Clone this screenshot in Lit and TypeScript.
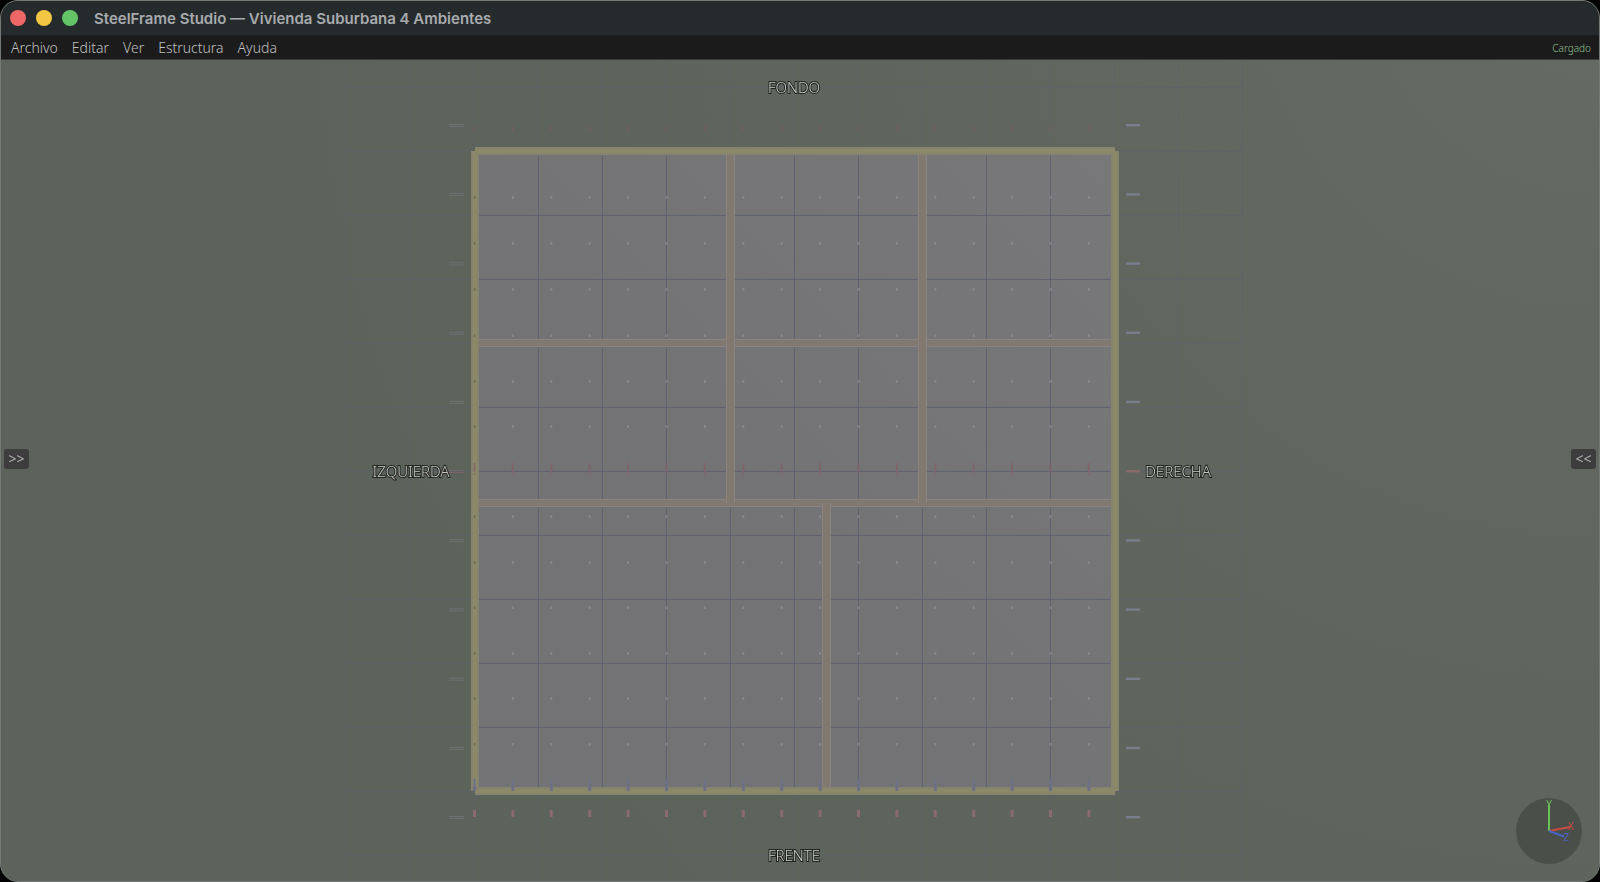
import { LitElement, html, svg, css } from "lit";
import { customElement, state } from "lit/decorators.js";

const range = (n: number) => Array.from({ length: n }, (_, i) => i);

const LEFT = 474;
const TOP = 91;
const CELL = 64;
const SIZE = CELL * 10;
const STUD = 38.4;

const studs = range(17).map((i) => LEFT - 0.5 + i * STUD);
const purlins = [137, 183, 229, 275, 321, 366, 456, 502, 547, 593, 638, 684];
const rails = range(11).map((i) => 65 + i * 69.2);

@customElement("plan-view")
class PlanView extends LitElement {
  static styles = css`
    :host { display: block; position: relative; min-height: 0; overflow: hidden; }
    .plan { display: block; width: 100%; height: 100%; will-change: transform; }
    .grid { stroke: #5c5f72; stroke-width: 1; }
    .outer { opacity: 0.42; }
    .inner { opacity: 0.85; }
    .wall-edge { fill: #86836f; }
    .wall { fill: #8b8968; }
    .part-edge { fill: #8b8380; }
    .part { fill: #81796f; }
    .label {
      font: 300 15px "Noto Sans", "Open Sans", sans-serif;
      fill: #c8cac7;
      stroke: #22251f;
      stroke-width: 2px;
      paint-order: stroke;
      text-anchor: middle;
    }
  `;

  private box(x: number, y: number, w: number, h: number, kind: string, edge: number) {
    const vertical = h > w;
    return svg`
      <rect class="${kind}-edge" x=${x} y=${y} width=${w} height=${h}></rect>
      <rect class=${kind}
        x=${vertical ? x + edge : x} y=${vertical ? y : y + edge}
        width=${vertical ? w - edge * 2 : w} height=${vertical ? h : h - edge * 2}></rect>`;
  }

  private lines(first: number, last: number, a: number, b: number, cls: string) {
    const steps = range(last - first + 1).map((i) => first + i);
    return svg`<g class="grid ${cls}">
      ${steps.map((k) => svg`<line x1=${LEFT - 0.5 + k * CELL} x2=${LEFT - 0.5 + k * CELL} y1=${a} y2=${b}></line>`)}
    </g>`;
  }

  render() {
    return html`
      <svg class="plan" viewBox="0 0 1598 821" preserveAspectRatio="xMidYMid slice" role="img" aria-label="Planta">
        <defs>
          <radialGradient id="ground" gradientUnits="userSpaceOnUse" cx="1598" cy="-100" r="1300">
            <stop offset="0" stop-color="#656a62"></stop>
            <stop offset="0.5" stop-color="#60665e"></stop>
            <stop offset="1" stop-color="#5c635a"></stop>
          </radialGradient>
          <linearGradient id="slab" x1="0" y1="1" x2="1" y2="0">
            <stop offset="0.4" stop-color="#737275"></stop>
            <stop offset="1" stop-color="#787779"></stop>
          </linearGradient>
        </defs>
        <rect width="1598" height="821" fill="url(#ground)"></rect>
        ${this.lines(-2, 12, 0, 821, "outer")}
        <g class="grid outer">
          ${range(13).map((k) => svg`<line x1="346" x2="1243" y1=${27.5 + k * CELL} y2=${27.5 + k * CELL}></line>`)}
        </g>

        <rect fill="url(#slab)" x=${LEFT} y=${TOP} width=${SIZE} height=${SIZE}></rect>
        ${this.lines(1, 9, TOP, TOP + SIZE, "inner")}
        <g class="grid inner">
          ${range(9).map((k) => svg`<line x1=${LEFT} x2=${LEFT + SIZE} y1=${155.5 + k * CELL} y2=${155.5 + k * CELL}></line>`)}
        </g>

        ${this.box(478, 279, 634, 8, "part", 1)}
        ${this.box(478, 439, 634, 8, "part", 1)}
        ${this.box(725, 94, 9, 349, "part", 1)}
        ${this.box(917, 94, 9, 349, "part", 1)}
        ${this.box(821, 443, 9, 285, "part", 1)}
        ${this.box(LEFT - 4, TOP, 8, SIZE, "wall", 2)}
        ${this.box(LEFT + SIZE - 4, TOP, 8, SIZE, "wall", 2)}
        ${this.box(LEFT, TOP - 4, SIZE, 8, "wall", 2)}
        ${this.box(LEFT, TOP + SIZE - 4, SIZE, 8, "wall", 2)}

        ${studs.map((x, i) => svg`
          <g>
            <rect x=${x - 1} y="66" width="2" height="5" fill="#7c5f5f" opacity="0.45"></rect>
            <rect x=${x - 1} y="403" width="2" height="9" fill="#83606a" opacity="0.7"></rect>
            <rect x=${x - 1} y="413" width="2" height="2" fill="#83606a" opacity="0.5"></rect>
            <rect x=${x - 1} y="719" width="2" height="12" fill="#6c708c" opacity="0.9"></rect>
            <rect x=${x - 1.5} y="726" width="3" height="5" fill="#6c7086" opacity="0.9"></rect>
            <rect x=${x - 1.5} y="750" width="3" height="7" fill="#8a6a6c"></rect>
            ${purlins.map((y) => svg`<rect x=${x - 1} y=${y - 1} width="2" height="3" fill=${i === 0 ? "#686850" : "#908f90"} opacity="0.7"></rect>`)}
          </g>`)}

        ${rails.map((y, i) => {
          const red = i === 5;
          return svg`
            <rect x="448" y=${y - 1} width="15" height="1" fill=${red ? "#80666a" : "#70777b"} opacity="0.7"></rect>
            <rect x="448" y=${y + 1} width="15" height="1" fill=${red ? "#80666a" : "#70777b"} opacity="0.7"></rect>
            <rect x="1125" y=${y - 1} width="14" height="2.4" fill=${red ? "#8a686a" : "#787e8c"}></rect>`;
        })}

        <text class="label" x="793" y="33">FONDO</text>
        <text class="label" x="793" y="801">FRENTE</text>
        <text class="label" x="410" y="417">IZQUIERDA</text>
        <text class="label" x="1177" y="417">DERECHA</text>
      </svg>
    `;
  }
}

@customElement("axis-gizmo")
class AxisGizmo extends LitElement {
  static styles = css`
    :host { display: block; }
    svg { display: block; width: 66px; height: 66px; overflow: visible; }
    .line { stroke-width: 2; fill: none; }
    .glyph { font: 10px "Noto Sans", sans-serif; text-anchor: middle; }
  `;
  render() {
    return html`
      <svg viewBox="0 0 66 66" role="img" aria-label="Ejes">
        <circle cx="33" cy="33" r="33" fill="#4a5049"></circle>
        <path class="line" stroke="#68c258" d="M33 33V7"></path>
        <path class="line" stroke="#cb4b44" d="M33 33L54 29"></path>
        <path class="line" stroke="#4961c4" d="M33 33L48 38.500"></path>
        <text class="glyph" x="33" y="10" fill="#68c258">Y</text>
        <text class="glyph" x="55" y="32" fill="#cb4b44">X</text>
        <text class="glyph" x="50" y="43" fill="#4961c4">Z</text>
      </svg>
    `;
  }
}

@customElement("app-root")
class AppRoot extends LitElement {
  @state() private menus = ["Archivo", "Editar", "Ver", "Estructura", "Ayuda"];

  static styles = css`
    :host { display: block; background: #000; height: 100vh; }
    * { box-sizing: border-box; }
    button { font: inherit; color: inherit; border: 0; padding: 0; margin: 0; background: none; }
    .window {
      height: 100%;
      display: grid;
      grid-template-rows: 34px 25px minmax(0, 1fr);
      border: 1px solid #737a75;
      border-radius: 18px;
      overflow: hidden;
      background: #5c635a;
    }
    .titlebar { display: flex; align-items: center; gap: 16px; padding: 0 9px; background: #252a2d; }
    .lights { display: flex; gap: 10px; }
    .light { width: 16px; height: 16px; border-radius: 50%; }
    .close { background: #ec6765; }
    .minimise { background: #f3c744; }
    .zoom { background: #62c466; }
    .title { margin: 0; padding-top: 1px; font: 600 15px/20px Inter, sans-serif; color: #a8abad; }
    .menubar {
      display: flex; align-items: center; justify-content: space-between;
      padding: 2px 8px 0 10px; background: #1b1b1b; border-bottom: 1px solid #393c39;
    }
    .menus { display: flex; gap: 14px; font: 300 14px/20px "Noto Sans", "Open Sans", sans-serif; color: #c0c0c0; }
    .status { font: 300 10px/16px "Noto Sans", sans-serif; color: #93c492; }
    .stage { position: relative; display: grid; min-height: 0; }
    .toggle {
      position: absolute; top: calc(50% - 22px); width: 25px; height: 20px;
      border-radius: 3px; background: #3c3d3c; color: #b4b5b4;
      font: 400 14px/20px "Noto Sans", sans-serif; text-align: center;
    }
    .left { left: 3px; }
    .right { right: 3px; }
    .gizmo { position: absolute; right: 17px; bottom: 17px; }
  `;

  render() {
    return html`
      <div class="window">
        <header class="titlebar">
          <div class="lights">
            <button class="light close" aria-label="Cerrar"></button>
            <button class="light minimise" aria-label="Minimizar"></button>
            <button class="light zoom" aria-label="Ampliar"></button>
          </div>
          <h1 class="title">SteelFrame Studio — Vivienda Suburbana 4 Ambientes</h1>
        </header>
        <div class="menubar">
          <nav class="menus">${this.menus.map((m) => html`<button>${m}</button>`)}</nav>
          <span class="status">Cargado</span>
        </div>
        <main class="stage">
          <plan-view></plan-view>
          <button class="toggle left" aria-label="Mostrar panel izquierdo">&gt;&gt;</button>
          <button class="toggle right" aria-label="Mostrar panel derecho">&lt;&lt;</button>
          <axis-gizmo class="gizmo"></axis-gizmo>
        </main>
      </div>
    `;
  }
}
